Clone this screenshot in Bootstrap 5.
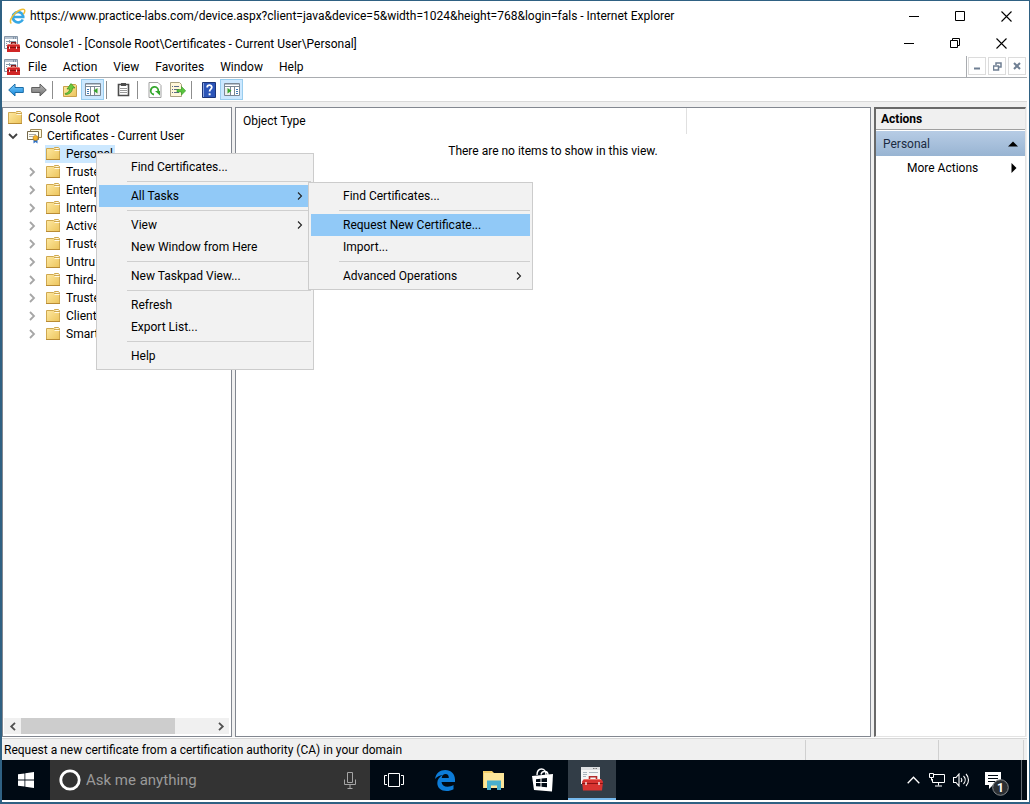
<!DOCTYPE html>
<html lang="en">
<head>
<meta charset="utf-8">
<meta name="viewport" content="width=device-width, initial-scale=1">
<title>Console1 - Certificates</title>
<link href="https://cdn.jsdelivr.net/npm/bootstrap@5.3.0/dist/css/bootstrap.min.css" rel="stylesheet">
<style>
  body { font-family: Roboto, "Open Sans", sans-serif; font-size: 12px; line-height: 18px; color: #000; background: #fff; }
  button { color: inherit; font: inherit; border: 0; background: none; padding: 0; }
  a { color: inherit; text-decoration: none; }
  svg { display: block; flex: none; }
  .frame { border: 1px solid #2f6183; border-left-width: 2px; border-bottom-width: 2px; padding: 0 2px 2px 0; }
  .bar-url { height: 30px; padding-left: 7px; margin-right: -2px; }
  .bar-title { height: 25px; padding-left: 2px; padding-right: 3px; gap: 5px; }
  .bar-menu { height: 22px; padding-left: 2px; border-bottom: 1px solid #a9acb0; }
  .bar-menu a { padding: 0 8px; }
  .win-ctl { width: 46px; height: 24px; display: flex; align-items: center; justify-content: center; }
  .mdi { border-left: 1px solid #a9acb0; padding: 1px 1px 0 1px; gap: 2px; }
  .mdi button { width: 18px; height: 18px; border: 1px solid #dcdcdc; display: flex; align-items: center; justify-content: center; }
  .tools { height: 24px; padding: 1px 2px; border-bottom: 1px solid #d9d9d9; }
  .tool { width: 23px; height: 21px; display: flex; align-items: center; justify-content: center; }
  .tool.on { background: #cce8ff; border: 1px solid #99cdee; }
  .tool-sep { width: 1px; height: 18px; margin: 0 5px 0 2px; background: #8d8d8d; }
  .work { background: #f0f0f0; padding: 5px 1px 0 0; gap: 3px; }
  .pane { background: #fff; border: 1px solid #828790; }
  .tree-pane { flex: 0 0 230px; }
  .tree { padding-top: 1px; }
  .tree-row { height: 18px; gap: 5px; }
  .tree-row .tw { width: 16px; height: 16px; display: flex; align-items: center; justify-content: center; }
  .lvl0 { padding-left: 4px; }
  .lvl1 { padding-left: 2px; }
  .lvl2 { padding-left: 21px; }
  .tree-label { white-space: nowrap; }
  .picked { background: #cce8ff; margin-left: 42px; width: 70px; }
  .scroll-x { height: 16px; background: #f0f0f0; margin: 0 2px 2px 1px; }
  .scroll-x button { width: 17px; display: flex; align-items: center; justify-content: center; }
  .thumb { width: 154px; background: #cdcdcd; }
  .ctx { position: absolute; z-index: 10; background: #f2f2f2; border: 1px solid #ccc; padding: 2px; list-style: none; margin: 0; }
  .ctx-main { left: 93px; top: 8px; width: 218px; }
  .ctx-sub { left: 209px; top: -3px; width: 225px; }
  .ctx li { position: relative; }
  .ctx li > button { display: flex; align-items: center; justify-content: space-between; width: 100%; height: 22px; padding: 0 8px 0 32px; text-align: left; white-space: nowrap; }
  .ctx li.hot > button { background: #91c9f7; }
  .ctx hr { margin: 3px 0 3px 28px; border: 0; height: 1px; background: #cfcfcf; opacity: 1; }
  .list-head { height: 26px; width: 451px; padding: 0 7px; border-right: 1px solid #e0e0e0; }
  .acts { flex: 0 0 152px; border: 2px solid #696969; border-right: 1px solid #e3e3e3; border-bottom: 1px solid #e3e3e3; }
  .acts-head { height: 21px; background: #f0f0f0; border-bottom: 1px solid #a0a0a0; padding-left: 5px; }
  .acts-group { height: 25px; margin-top: 1px; padding: 0 7px; background: linear-gradient(#b7cce5, #98b4d2); color: #1b2b42; }
  .acts-group svg { fill: #000; }
  .acts-more { height: 24px; padding: 0 8px 0 31px; }
  .status { height: 22px; background: #f0f0f0; border-top: 1px solid #d7d7d7; margin-top: 1px; padding-left: 2px; }
  .status-cell { border-left: 1px solid #d0d0d0; margin-top: 1px; }
  .cell-a { width: 133px; }
  .cell-b { width: 86px; border-right: 1px solid #d0d0d0; margin-right: 3px; }
  .taskbar { height: 40px; background: #000a14; color: #fff; }
  .taskbar button { height: 40px; display: flex; align-items: center; justify-content: center; }
  .task { width: 48px; }
  .tasks { gap: 1px; }
  .tasks .task:first-child { width: 50px; padding-right: 2px; }
  .finder { width: 320px; background: #333; padding: 0 14px 0 9px; gap: 5px; }
  .finder input { background: none; border: 0; outline: 0; color: #fff; font-size: 15px; line-height: 24px; height: 24px; padding: 0; min-width: 0; }
  .finder input::placeholder { color: #9a9a9a; opacity: 1; }
  .task.run { background: #323d47; border-bottom: 2px solid #76b9ed; }
  .tray { width: 24px; }
  .taskbar .notes { width: 40px; padding: 8px 0 0 8px; }
  .taskbar .peek { width: 6px; margin-left: 8px; border-left: 1px solid #626a72; }
</style>
</head>
<body>
<svg width="0" height="0" class="position-absolute" aria-hidden="true">
  <defs>
    <linearGradient id="gFold" x1="0" y1="0" x2="1" y2="1"><stop offset="0" stop-color="#ffeaa3"/><stop offset="1" stop-color="#ecc45c"/></linearGradient>
    <linearGradient id="gBlue" x1="0" y1="0" x2="0" y2="1"><stop offset="0" stop-color="#7fd0ff"/><stop offset="1" stop-color="#1283d8"/></linearGradient>
    <linearGradient id="gGrey" x1="0" y1="0" x2="0" y2="1"><stop offset="0" stop-color="#bcbcbc"/><stop offset="1" stop-color="#6e6e6e"/></linearGradient>
  </defs>
  <symbol id="folder" viewBox="0 0 16 16">
    <path d="M1.500 13.500V2.500h7l1-1h4l1 1v11z" fill="url(#gFold)" stroke="#cfa850"/>
    <path d="M9.500 4.500h5M10.500 2.500h3" stroke="#fff9e4"/><path d="M9 3.500h5" stroke="#cfa850"/><path d="M1 13.500h14" stroke="#b98c35"/>
  </symbol>
  <symbol id="mmc" viewBox="0 0 16 16">
    <path d="M.5.5h13v12H.5z" fill="#fff" stroke="#8797a8"/>
    <path d="M1 1h12v2H1z" fill="#b9c5d2"/><path d="M9 2h1m1 0h1" stroke="#50667c"/>
    <path d="M2 5.500h3M2 7.500h1M2 9.500h1M6 5.500h6M5.500 4v3" stroke="#8797a8"/>
    <path d="M7.500 9V6.700h4V9" fill="none" stroke="#8a1a1a" stroke-width="1.400"/>
    <path d="M3 9.500l1-1.500h11l1 1.500V16H3z" fill="#d02626"/><path d="M4 8.500h11" stroke="#ee6f66"/>
    <path d="M3 11.500h13" stroke="#8d1010"/><path d="M5.500 10.500v2.500M12.500 10.500v2.500" stroke="#f7e4e4"/>
  </symbol>
  <symbol id="closed" viewBox="0 0 8 10"><path d="M2 1l4 4-4 4" fill="none" stroke="#a6a6a6" stroke-width="1.800"/></symbol>
  <symbol id="more" viewBox="0 0 6 8"><path d="M1 .5L4.500 4 1 7.500" fill="none" stroke="#222" stroke-width="1.100"/></symbol>
  <symbol id="cross" viewBox="0 0 11 11"><path d="M.5.5l10 10M10.500.5l-10 10" stroke="#000" stroke-width="1.100"/></symbol>
  <symbol id="dash" viewBox="0 0 10 11"><path d="M0 5.500h10" stroke="#000"/></symbol>
</svg>

<div class="frame d-flex flex-column min-vh-100">
  <header>
    <div class="bar-url d-flex align-items-center">
      <svg width="17" height="17" viewBox="0 0 17 17"><path d="M13.800 11.500a5.200 5.200 0 1 1 .4-3.300v.8H5" fill="none" stroke="#35a7e4" stroke-width="2.600"/><path d="M2.300 15.500C-1 12 6 3.500 12.500 1.500c4-1.200 4 2 1.800 4.700" fill="none" stroke="#efbf36" stroke-width="1.500"/></svg>
      <span class="flex-grow-1 ps-1">https://www.practice-labs.com/device.aspx?client=java&amp;device=5&amp;width=1024&amp;height=768&amp;login=fals - Internet Explorer</span>
      <button class="win-ctl" aria-label="Minimize"><svg width="10" height="11"><use href="#dash"/></svg></button>
      <button class="win-ctl" aria-label="Maximize"><svg width="10" height="11"><path d="M.5.5h9v9h-9z" fill="none" stroke="#000"/></svg></button>
      <button class="win-ctl" aria-label="Close"><svg width="11" height="11"><use href="#cross"/></svg></button>
    </div>
    <div class="bar-title d-flex align-items-center">
      <svg width="16" height="16"><use href="#mmc"/></svg>
      <span class="flex-grow-1">Console1 - [Console Root\Certificates - Current User\Personal]</span>
      <div class="d-flex">
        <button class="win-ctl" aria-label="Minimize console"><svg width="10" height="11"><use href="#dash"/></svg></button>
        <button class="win-ctl" aria-label="Restore console"><svg width="10" height="11"><path d="M.5 2.500h7v7h-7zM2.500 2.500v-2h7v7h-2" fill="none" stroke="#000"/></svg></button>
        <button class="win-ctl" aria-label="Close console"><svg width="11" height="11"><use href="#cross"/></svg></button>
      </div>
    </div>
    <nav class="bar-menu d-flex align-items-center">
      <svg width="16" height="16"><use href="#mmc"/></svg>
      <a href="#">File</a><a href="#">Action</a><a href="#">View</a><a href="#">Favorites</a><a href="#">Window</a><a href="#">Help</a>
      <div class="mdi d-flex ms-auto align-self-stretch">
        <button aria-label="Minimize child"><svg width="8" height="8"><path d="M1 6.500h6" stroke="#6f7f93" stroke-width="2"/></svg></button>
        <button aria-label="Restore child"><svg width="9" height="9"><path d="M.5 4h5v4h-5zM3 3V1h5v4H6" fill="none" stroke="#6f7f93" stroke-width="1.500"/></svg></button>
        <button aria-label="Close child"><svg width="8" height="8"><path d="M1 1l6 6M7 1L1 7" stroke="#6f7f93" stroke-width="2"/></svg></button>
      </div>
    </nav>
    <div class="tools d-flex align-items-center" role="toolbar" aria-label="Console">
      <button class="tool" aria-label="Back"><svg width="16" height="14"><path d="M.7 7L7 1v3.500h8.300v5H7V13z" fill="url(#gBlue)" stroke="#1b6da8"/></svg></button>
      <button class="tool" aria-label="Forward"><svg width="16" height="14"><path d="M15.300 7L9 1v3.500H.7v5H9V13z" fill="url(#gGrey)" stroke="#5f5f5f"/></svg></button>
      <span class="tool-sep"></span>
      <button class="tool" aria-label="Up one level"><svg width="16" height="16"><path d="M1.500 14.500V4.500h6l1-2h5l1 1v11z" fill="url(#gFold)" stroke="#c9a04a"/><path d="M3 11.500c3-.5 4.500-2 4.500-4.500H5L9 1.500 13 6h-2.500c0 4-3 6.500-7 6.500z" fill="#6cc83c" stroke="#2f8a1d" stroke-width=".6"/></svg></button>
      <button class="tool on" aria-label="Show console tree" aria-pressed="true"><svg width="16" height="13"><path d="M.5.5h15v12H.5z" fill="#fff" stroke="#7b8794"/><path d="M1 1.500h14" stroke="#b9c3cd"/><path d="M5.500 4v8M9.500 4v8M1 3.500h14" stroke="#7b8794"/><path d="M2 6.500h2M2 8.500h2M2 10.500h2" stroke="#3b78b5"/><path d="M10 5h5v7h-5z" fill="#eee"/><path d="M12.500 5v5.500L8.500 7.700z" fill="#37a52b"/></svg></button>
      <span class="tool-sep"></span>
      <button class="tool" aria-label="Paste"><svg width="13" height="15"><path d="M1.500 2.500h10v11h-10z" fill="#fff" stroke="#4c4c4c" stroke-width="1.600"/><path d="M4 1h5v3H4z" fill="#4c4c4c"/><path d="M3 6.500h7M3 8.500h7M3 10.500h7" stroke="#999"/></svg></button>
      <span class="tool-sep"></span>
      <button class="tool" aria-label="Refresh"><svg width="14" height="16"><path d="M1 .5h9l3 3v12H1z" fill="#fff" stroke="#a1a1a1"/><path d="M6 12.500A3.800 3.800 0 1 1 10.300 9" fill="none" stroke="#35a72d" stroke-width="1.800"/><path d="M7 9h5v4.500z" fill="#35a72d"/></svg></button>
      <button class="tool" aria-label="Export list"><svg width="16" height="16"><path d="M.5.5h9l2 2v12h-11z" fill="#fff7d9" stroke="#a9a17f"/><path d="M2 4.500h1m1 0h5M2 7.500h1m1 0h5M2 10.500h1m1 0h5" stroke="#5d6a88"/><path d="M7 7.500h4.500v-3l4.200 4.300-4.200 4.200v-3H7z" fill="#59c43d" stroke="#379e26" stroke-width=".6"/></svg></button>
      <span class="tool-sep"></span>
      <button class="tool" aria-label="Help"><svg width="14" height="16"><path d="M.5.5h13v15H.5z" fill="#2c55b8" stroke="#1c3478"/><path d="M1.500 1v14" stroke="#8ba6e0"/><path d="M5.200 5.500c0-3 4.600-3 4.600-.3 0 2-2.200 2-2.200 4.300" fill="none" stroke="#fff" stroke-width="1.800"/><path d="M6.600 11.300h2v2h-2z" fill="#fff"/></svg></button>
      <button class="tool on" aria-label="Show action pane" aria-pressed="true"><svg width="16" height="13"><path d="M.5.5h15v12H.5z" fill="#fff" stroke="#7b8794"/><path d="M1 1.500h14" stroke="#b9c3cd"/><path d="M10.500 4v8M6.500 4v8M1 3.500h14" stroke="#7b8794"/><path d="M1 5h5v7H1z" fill="#eee"/><path d="M12 6.500h2M12 8.500h2M12 10.500h2" stroke="#3b78b5"/><path d="M3.500 5v5.500l4-2.800z" fill="#37a52b"/></svg></button>
    </div>
  </header>

  <main class="work d-flex flex-grow-1">
    <section class="pane tree-pane d-flex flex-column">
      <div class="tree flex-grow-1" id="tree"></div>
      <div class="scroll-x d-flex">
        <button aria-label="Scroll left"><svg width="8" height="9"><path d="M6 .8L2.200 4.500 6 8.200" fill="none" stroke="#505050" stroke-width="1.800"/></svg></button>
        <span class="thumb"></span>
        <button class="ms-auto" aria-label="Scroll right"><svg width="8" height="9"><path d="M2 .8l3.800 3.700L2 8.200" fill="none" stroke="#505050" stroke-width="1.800"/></svg></button>
      </div>
    </section>
    <section class="pane flex-grow-1">
      <div class="list-head d-flex align-items-center">Object Type</div>
      <p class="text-center mt-2 mb-0">There are no items to show in this view.</p>
    </section>
    <aside class="pane acts">
      <div class="acts-head d-flex align-items-center fw-bold">Actions</div>
      <button class="acts-group d-flex align-items-center justify-content-between w-100">Personal <svg width="10" height="6"><path d="M0 5.500L5 .5l5 5z"/></svg></button>
      <button class="acts-more d-flex align-items-center justify-content-between w-100">More Actions <svg width="6" height="10"><path d="M.5 0l5 5-5 5z"/></svg></button>
    </aside>
  </main>

  <footer>
    <div class="status d-flex">
      <span class="flex-grow-1 align-self-center">Request a new certificate from a certification authority (CA) in your domain</span>
      <span class="status-cell cell-a"></span><span class="status-cell cell-b"></span>
    </div>
    <div class="taskbar d-flex align-items-center">
      <button class="task" aria-label="Start"><svg width="16" height="16"><path d="M0 2.300L6.500 1.400v6.200H0zM7.300 1.300L16 0v7.600H7.300zM0 8.400h6.500v6.200L0 13.700zM7.300 8.400H16V16l-8.700-1.300z" fill="#fff"/></svg></button>
      <div class="finder d-flex align-items-center align-self-stretch">
        <svg width="22" height="22"><circle cx="11" cy="11" r="9.200" fill="none" stroke="#fff" stroke-width="2.800"/></svg>
        <input class="flex-grow-1" type="text" aria-label="Search" placeholder="Ask me anything">
        <svg width="12" height="17"><path d="M3.500.5h5v10h-5zM.5 7.500v5h11v-5M6 12.500V16M3.500 16.500h5" fill="none" stroke="#a5a5a5"/></svg>
      </div>
      <div class="tasks d-flex">
        <button class="task" aria-label="Task view"><svg width="20" height="14"><path d="M4.500.5h11v13h-11zM3 2.500H.5v9H3M17 2.500h2.500v9H17" fill="none" stroke="#fff"/></svg></button>
        <button class="task" aria-label="Edge"><svg width="20" height="21"><path d="M0 9C1 3 5 0 10.300 0 16 0 20 4 20 9.500V12H6.500c.3 3 2.700 4.700 6 4.700 2.200 0 4.200-.6 6-1.700v4.200c-2 1.200-4.300 1.800-7 1.800C6 21 2.300 17.800 2.300 13c0-3.300 2-6.300 5.500-8C4.500 5.400 2 6.500 0 9zm6.700-1h7.100c0-2.500-1-3.900-3.300-3.900C8.500 4.100 7.100 5.500 6.700 8z" fill="#0c7cd8"/></svg></button>
        <button class="task" aria-label="File Explorer"><svg width="22" height="19"><path d="M0 0h9l2 2h10v15H0z" fill="#f4cf68"/><path d="M1 2h20v15H1z" fill="#fce69a"/><path d="M4 19V9.500h14V19h-4v-4.500H8V19z" fill="#49b0cd"/></svg></button>
        <button class="task" aria-label="Store"><svg width="22" height="24"><path d="M5 7C5 3 7 1 9.500 1S14 3 14 7M9 6.500C10 2.500 16 2.500 16 7" fill="none" stroke="#fff" stroke-width="1.400"/><path d="M0 8l21-2-1 17.500L2 22z" fill="#fff"/><path d="M4 11.200l4.500-.5V14H4zM9.500 10.600l5.500-.6v4H9.500zM4 15h4.500v3.600L4 18.200zM9.500 15H15v4.300l-5.500-.6z" fill="#000a14"/></svg></button>
        <button class="task run" aria-label="Management console"><svg width="22" height="24"><path d="M0 0h19v17H0z" fill="#f5f5f5"/><path d="M0 0h19v3H0z" fill="#dcdfe2"/><path d="M12 1.500h1.500m1 0H16" stroke="#777"/><path d="M2 5.500h4M2 7.500h4M2 9.500h3M8 5.500h9" stroke="#a9b3bc"/><path d="M8.500 13v-3.200h7V13" fill="none" stroke="#b32b2b" stroke-width="1.600"/><path d="M1 14.500L3 12h17l2 2.500-1 9H2z" fill="#d83431"/><path d="M3 12.500h17" stroke="#f0746b"/><path d="M1 16.500h21" stroke="#8d1414"/><path d="M5 15v3M18 15v3" stroke="#f5dede" stroke-width="1.500"/></svg></button>
      </div>
      <div class="d-flex ms-auto">
        <button class="tray" aria-label="Show hidden icons"><svg width="13" height="8"><path d="M.7 7.300l5.800-6 5.800 6" fill="none" stroke="#fff" stroke-width="1.300"/></svg></button>
        <button class="tray" aria-label="Network"><svg width="16" height="14"><path d="M5 1.500h10.500v8H3.500V6M9.500 9.500v3M6 13h7M.5.5h4v4h-4zM2.500 4.500v3" fill="none" stroke="#fff"/></svg></button>
        <button class="tray" aria-label="Volume"><svg width="17" height="14"><path d="M.5 4.500h2.500l3-3.500v12L3 9.500H.5zM8 5c1 1.200 1 2.800 0 4M10.500 3c2.200 2.300 2.200 5.700 0 8M13 1c3.300 3.300 3.300 8.700 0 12" fill="none" stroke="#fff" stroke-width="1.100"/></svg></button>
        <button class="notes" aria-label="Notifications"><svg width="24" height="24"><path d="M0 0h16v13H8l-4 4v-4H0z" fill="#fff"/><path d="M3 3.500h10M3 6.500h10M3 9.500h7" stroke="#000a14"/><circle cx="15.500" cy="15.500" r="7.800" fill="#2b2f33" stroke="#85898c"/><text x="15.500" y="20" font-size="12" font-weight="700" text-anchor="middle" fill="#fff">1</text></svg></button>
        <button class="peek" aria-label="Show desktop"></button>
      </div>
    </div>
  </footer>
</div>

<template id="menus">
  <ul class="ctx ctx-main">
    <li><button>Find Certificates...</button></li>
    <li><hr></li>
    <li class="hot"><button>All Tasks <svg width="6" height="8"><use href="#more"/></svg></button>
      <ul class="ctx ctx-sub">
        <li><button>Find Certificates...</button></li>
        <li><hr></li>
        <li class="hot"><button>Request New Certificate...</button></li>
        <li><button>Import...</button></li>
        <li><hr></li>
        <li><button>Advanced Operations <svg width="6" height="8"><use href="#more"/></svg></button></li>
      </ul>
    </li>
    <li><hr></li>
    <li><button>View <svg width="6" height="8"><use href="#more"/></svg></button></li>
    <li><button>New Window from Here</button></li>
    <li><hr></li>
    <li><button>New Taskpad View...</button></li>
    <li><hr></li>
    <li><button>Refresh</button></li>
    <li><button>Export List...</button></li>
    <li><hr></li>
    <li><button>Help</button></li>
  </ul>
</template>

<script>
  const folder = '<svg width="16" height="16"><use href="#folder"/></svg>';
  const tree = document.getElementById('tree');
  const stores = ['Truste', 'Enterp', 'Intern', 'Active', 'Truste', 'Untru', 'Third-', 'Truste', 'Client', 'Smart'];
  tree.innerHTML =
    `<div class="tree-row lvl0 d-flex align-items-center">${folder}<span class="tree-label">Console Root</span></div>
     <div class="tree-row lvl1 d-flex align-items-center"><span class="tw"><svg width="10" height="7"><path d="M1 1l4 4 4-4" fill="none" stroke="#404040" stroke-width="1.800"/></svg></span>
       <svg width="16" height="16"><path d="M4.500 1.500h11v8h-11z" fill="#fff8dd" stroke="#a08a55"/><path d="M1.500 3.500h11v8h-11z" fill="#fffef4" stroke="#75694b"/><path d="M3 6.500h7M3 8.500h4" stroke="#a9a9a9"/><path d="M7.500 10v5.500l2-1.500 2 1.500V10z" fill="#2d6fc4"/><circle cx="9.500" cy="10" r="2.500" fill="#f3b32b" stroke="#b67a12" stroke-width=".6"/></svg>
       <span class="tree-label">Certificates - Current User</span></div>
     <div class="position-relative"><div class="tree-row picked d-flex align-items-center">${folder}<span class="tree-label">Personal</span></div>` +
       document.getElementById('menus').innerHTML + '</div>' +
    stores.map(s => `<div class="tree-row lvl2 d-flex align-items-center"><span class="tw"><svg width="8" height="10"><use href="#closed"/></svg></span>${folder}<span class="tree-label">${s}</span></div>`).join('');
</script>
<script src="https://cdn.jsdelivr.net/npm/bootstrap@5.3.0/dist/js/bootstrap.bundle.min.js"></script>
</body>
</html>
